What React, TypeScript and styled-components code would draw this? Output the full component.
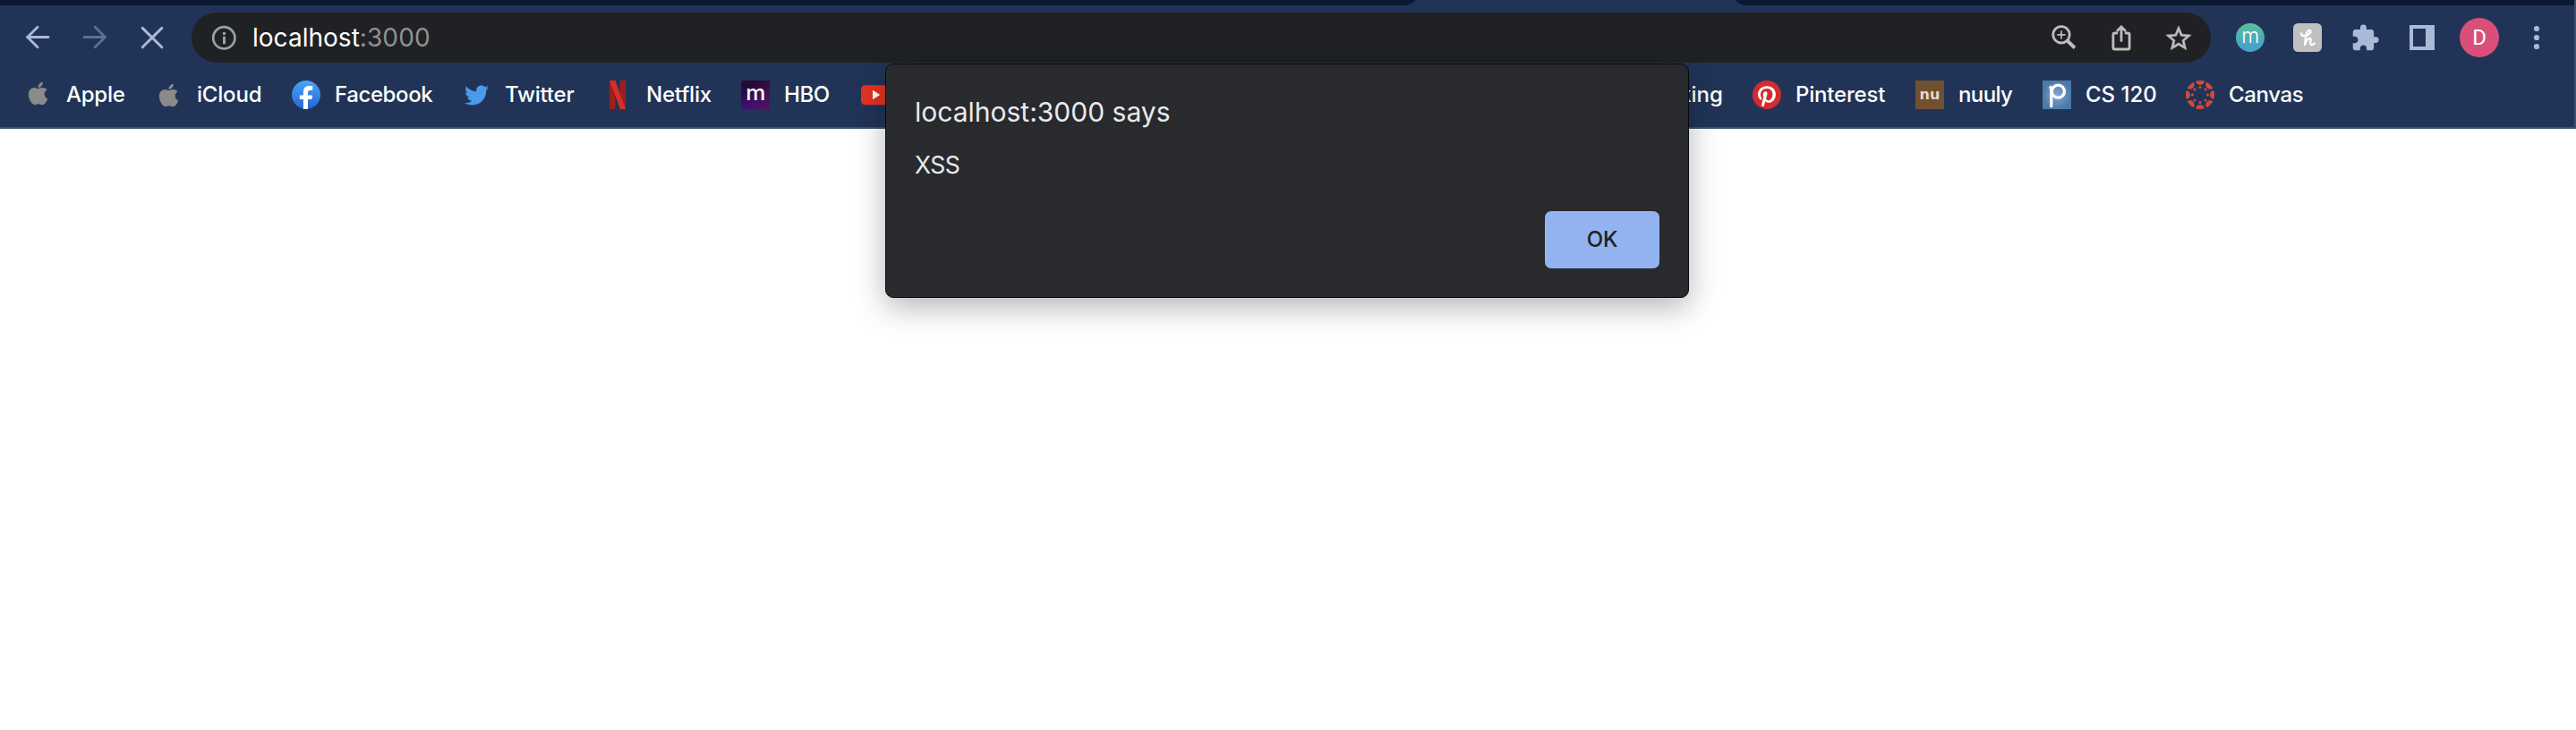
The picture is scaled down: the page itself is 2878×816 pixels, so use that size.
import React from "react";
import styled, { createGlobalStyle } from "styled-components";
import { FaApple, FaTwitter, FaPinterest } from "react-icons/fa";
import { MdExtension, MdStarBorder } from "react-icons/md";

const color = {
  strip: "#0b1a30",
  chrome: "#213457",
  edge: "#3d5173",
  icon: "#a9b9d8",
  iconDim: "#5e7194",
  field: "#202124",
  fieldIcon: "#bdbdbd",
  dialog: "#292a2d",
  button: "#93b3f0",
};

const GlobalStyle = createGlobalStyle`
  html, body { margin: 0; background: #fff; }
  body { font-family: Inter, "Liberation Sans", sans-serif; overflow: hidden; }
  * { box-sizing: border-box; }
`;

const Page = styled.div`
  position: relative;
  width: 2878px;
  height: 816px;
  overflow: hidden;
  background: #fff;
`;

const Chrome = styled.header`
  height: 144px;
  background: ${color.chrome};
  border-right: 2px solid rgba(255, 255, 255, 0.13);
  border-bottom: 2px solid ${color.edge};
`;

const TabStrip = styled.div`
  display: flex;
  justify-content: space-between;
  align-items: flex-end;
  height: 6px;
  overflow: hidden;
`;

const StripEnd = styled.div<{ $side: "left" | "right" }>`
  flex: none;
  width: ${(p) => (p.$side === "left" ? "1585px" : "941px")};
  height: 20px;
  background: ${color.strip};
  border-radius: ${(p) => (p.$side === "left" ? "0 0 16px 0" : "0 0 0 16px")};
`;

const Toolbar = styled.div`
  display: flex;
  align-items: center;
  height: 72px;
  padding: 0 10px;
`;

const Slot = styled.span<{ $tone?: string }>`
  display: flex;
  align-items: center;
  justify-content: center;
  flex: none;
  width: 64px;
  height: 56px;
  color: ${(p) => p.$tone ?? color.icon};
`;

const NavGroup = styled.nav`
  display: flex;
`;

const AddressBar = styled.div`
  display: flex;
  align-items: center;
  width: 2256px;
  height: 56px;
  margin: 0 12px;
  padding: 0 4px;
  border-radius: 28px;
  background: ${color.field};
`;

const Address = styled.div`
  flex: 1;
  padding-bottom: 1px;
  color: #fff;
  font-size: 28px;
  letter-spacing: 0.02px;
  line-height: 34px;
`;

const Port = styled.span`
  color: #909192;
  letter-spacing: 0.1px;
`;

const Avatar = styled.span`
  display: flex;
  align-items: center;
  justify-content: center;
  width: 44px;
  height: 44px;
  border-radius: 50%;
  background: #da4f7a;
  color: #fff;
  font: 400 24px/44px Roboto, sans-serif;
`;

const BookmarkBar = styled.div`
  display: flex;
  align-items: center;
  height: 56px;
  padding: 0 26px;
`;

const Bookmark = styled.a<{ $width: number }>`
  display: flex;
  align-items: center;
  flex: none;
  gap: 16px;
  width: ${(p) => p.$width}px;
  height: 32px;
  white-space: nowrap;
`;

const BookmarkLabel = styled.span<{ $tracking: number }>`
  color: #fff;
  font-size: 24px;
  font-weight: 500;
  line-height: 30px;
  letter-spacing: ${(p) => p.$tracking}px;
`;

const Favicon = styled.span<{ $drop?: number }>`
  display: flex;
  align-items: center;
  justify-content: center;
  flex: none;
  width: 32px;
  height: 32px;
  margin-top: ${(p) => p.$drop ?? 0}px;
`;

const PinDisc = styled.span`
  display: flex;
  width: 32px;
  height: 32px;
  border-radius: 50%;
  background: radial-gradient(circle, #fff 60%, #d32b2f 62%);
`;

const NuTile = styled.span`
  width: 32px;
  height: 32px;
  background: #70502e;
  color: #e8d8c8;
  font: 700 16px/31px "DejaVu Sans", sans-serif;
  text-align: center;
`;

const Dialog = styled.section`
  position: absolute;
  left: 989px;
  top: 71px;
  display: flex;
  flex-direction: column;
  width: 898px;
  height: 262px;
  padding: 35px 32px 32px 32px;
  border: 1px solid #08090b;
  border-radius: 9px;
  background: ${color.dialog};
  box-shadow: 0 10px 34px rgba(0, 0, 0, 0.3);
  color: #e8eaed;
`;

const DialogTitle = styled.h1`
  margin: 0;
  font-size: 30px;
  font-weight: 400;
  line-height: 36px;
`;

const DialogMessage = styled.p`
  margin: 25px 0 0;
  font-size: 26.5px;
  font-weight: 400;
  line-height: 32px;
  letter-spacing: -0.5px;
`;

const OkButton = styled.button`
  align-self: flex-end;
  width: 128px;
  height: 64px;
  margin-top: auto;
  padding: 0;
  border: 0;
  border-radius: 7px;
  background: ${color.button};
  color: #202124;
  font: 500 24px/30px Inter, sans-serif;
  letter-spacing: -0.2px;
`;

const Svg = (p: React.SVGProps<SVGSVGElement>) => (
  <svg width="32" height="32" viewBox="0 0 32 32" fill="none" stroke="currentColor" strokeLinecap="round" {...p} />
);

const BackIcon = () => (
  <Svg strokeWidth="2.8"><path d="M28 15.5H4.5M16 4.3 4.7 15.5 16 26.8" /></Svg>
);
const ForwardIcon = () => (
  <Svg strokeWidth="2.8"><path d="M4 15.5H27.5M16.2 4.3 27.4 15.5 16.2 26.8" /></Svg>
);
const StopIcon = () => (
  <Svg strokeWidth="3"><path d="M5.2 5.4 26.8 26.8M26.8 5.4 5.2 26.8" /></Svg>
);
const InfoIcon = () => (
  <Svg>
    <circle cx="16.3" cy="16.3" r="12.1" strokeWidth="2.7" />
    <path d="M15 10h3v3h-3zM15 14.8h3v8.4h-3z" fill="currentColor" stroke="none" />
  </Svg>
);
const ZoomIcon = () => (
  <Svg strokeLinecap="butt">
    <circle cx="13" cy="12.8" r="9.2" strokeWidth="2.8" />
    <path d="M19.2 19 28 27.6" strokeWidth="4" />
    <path d="M8.4 12.8h9.2M13 8.2v9.2" strokeWidth="1.7" />
  </Svg>
);
const ShareIcon = () => (
  <Svg strokeWidth="2.8">
    <path d="M11 11H8.6Q6.9 11 6.9 12.7V27.2Q6.9 29 8.7 29H23.3Q25.1 29 25.1 27.2V12.7Q25.1 11 23.4 11H21" />
    <path d="M16 19.5V4.5M11.7 8.2 16 4 20.3 8.2" />
  </Svg>
);
const PanelIcon = () => (
  <Svg stroke="none"><path fill="currentColor" fillRule="evenodd" d="M2 2h28v28H2zM6 6v20h14V6z" /></Svg>
);
const MenuIcon = () => (
  <Svg stroke="none" fill="currentColor">
    <circle cx="16" cy="6" r="3.1" /><circle cx="16" cy="16" r="3.1" /><circle cx="16" cy="26" r="3.1" />
  </Svg>
);
const MomentumIcon = () => (
  <Svg stroke="none">
    <defs><linearGradient id="mint" x1="0" y1="0" x2="0.15" y2="1"><stop offset="0.1" stopColor="#57bf9b" /><stop offset="0.85" stopColor="#46a3c9" /></linearGradient></defs>
    <circle cx="16" cy="16" r="16" fill="url(#mint)" />
    <text x="6.2" y="22" fontFamily="Inter" fontSize="23.5" fontWeight="300" fill="#fff" textLength="20" lengthAdjust="spacingAndGlyphs">m</text>
  </Svg>
);
const HoneyIcon = () => (
  <Svg stroke="#fff" strokeWidth="2.3" strokeLinejoin="round">
    <rect width="32" height="32" rx="5.5" fill="#c0c0c0" stroke="none" />
    <path d="M9 11.4C9 14.4 13 14.8 16.4 13 20 11 20.6 7.8 18 7.8 14.8 7.8 13.6 13.5 13.2 24 14.4 19.6 16.8 16.8 18.8 17 21 17.4 18.6 21 19.2 22.8 20 24.6 22.4 24.2 23.8 22.6" />
  </Svg>
);

const FacebookIcon = () => (
  <Svg stroke="none">
    <defs>
      <linearGradient id="fb" x1="0" y1="0" x2="0" y2="1"><stop stopColor="#49a6f5" /><stop offset="1" stopColor="#2563d8" /></linearGradient>
    </defs>
    <circle cx="16" cy="16" r="16" fill="url(#fb)" />
    <path fill="#fff" d="M12.9 31.8V21H8.8V16.4H12.9V13C12.9 8.4 15.2 6 19.3 6H23.2V10.8H21C19 10.8 18 11.6 18 13.5V16.4H23.1L22.4 21H18V31.8Q15.4 32.2 12.9 31.8Z" />
  </Svg>
);
const NetflixIcon = () => (
  <Svg stroke="none">
    <path fill="#a01f1c" d="M7 0h6.3v32H7zM18.7 0H25v32h-6.3z" />
    <path fill="#d62f27" d="M7 0h6.3L25 32h-6z" />
  </Svg>
);
const HboIcon = () => (
  <Svg stroke="none">
    <defs>
      <linearGradient id="hbo" x1="0" y1="0" x2="0" y2="1"><stop offset="0.2" stopColor="#230b35" /><stop offset="1" stopColor="#38107a" /></linearGradient>
      <linearGradient id="hbo2" x1="0.3" y1="0.3" x2="1" y2="1"><stop stopColor="#541060" stopOpacity="0" /><stop offset="1" stopColor="#541060" /></linearGradient>
    </defs>
    <rect width="32" height="32" rx="1.5" fill="url(#hbo)" />
    <rect width="32" height="32" rx="1.5" fill="url(#hbo2)" />
    <text x="5.2" y="22" fontFamily="Inter" fontSize="23" fontWeight="500" fill="#fff" textLength="22" lengthAdjust="spacingAndGlyphs">m</text>
  </Svg>
);
const YoutubeIcon = () => (
  <Svg stroke="none">
    <rect x="2" y="5.2" width="32" height="22" rx="4.5" fill="#e33324" />
    <path fill="#fff" d="M15 10.8 23.2 16 15 21.3z" />
  </Svg>
);
const PiazzaIcon = () => (
  <Svg strokeWidth="3.2" stroke="#fff" strokeLinecap="butt">
    <defs><radialGradient id="pz"><stop stopColor="#84a9cc" /><stop offset="1" stopColor="#4c7aa8" /></radialGradient></defs>
    <rect width="32" height="32" fill="url(#pz)" stroke="none" />
    <path d="M9.8 30V12Q9.8 8 8 6.6" />
    <circle cx="17.4" cy="12.2" r="7" />
  </Svg>
);
const spokes = [0, 45, 90, 135, 180, 225, 270, 315];
const CanvasIcon = () => (
  <Svg stroke="none" fill="#d44a38">
    <defs><clipPath id="rim"><circle cx="16" cy="16" r="16" /></clipPath></defs>
    <g clipPath="url(#rim)">
      {spokes.map((a) => (
        <g key={a} transform={`rotate(${a} 16 16)`}>
          <circle cx="16" cy="0" r="5" />
          <circle cx="16" cy="7.5" r="1.5" />
        </g>
      ))}
    </g>
  </Svg>
);

type Mark = { label?: string; width: number; tracking?: number; drop?: number; icon?: React.ReactNode };

const marks: Mark[] = [
  { label: "Apple", width: 146, tracking: -0.25, icon: <FaApple size={29} color="#8b8b8b" />, drop: -4 },
  { label: "iCloud", width: 154, tracking: -0.2, icon: <FaApple size={29} color="#8b8b8b" /> },
  { label: "Facebook", width: 190, tracking: -0.4, icon: <FacebookIcon /> },
  { label: "Twitter", width: 158, tracking: -0.2, icon: <FaTwitter size={27} color="#4a9be8" /> },
  { label: "Netflix", width: 154, tracking: -0.2, icon: <NetflixIcon /> },
  { label: "HBO", width: 132, tracking: -0.4, icon: <HboIcon /> },
  { width: 916, icon: <YoutubeIcon /> },
  { label: "king", width: 82 },
  { label: "Pinterest", width: 182, tracking: -0.2, icon: <PinDisc><FaPinterest size={32} color="#d32b2f" /></PinDisc> },
  { label: "nuuly", width: 142, tracking: -0.6, icon: <NuTile>nu</NuTile> },
  { label: "CS 120", width: 160, icon: <PiazzaIcon /> },
  { label: "Canvas", width: 134, tracking: -0.35, icon: <CanvasIcon /> },
];

const BookmarkItem = ({ label, width, tracking = 0, drop, icon }: Mark) => (
  <Bookmark $width={width}>
    {icon && <Favicon $drop={drop}>{icon}</Favicon>}
    {label && <BookmarkLabel $tracking={tracking}>{label}</BookmarkLabel>}
  </Bookmark>
);

const StarFrame = styled.span`
  display: flex;
  margin-top: 1px;

  path {
    stroke: currentColor;
    stroke-width: 0.35px;
  }

  path[fill="none"] {
    stroke: none;
  }
`;

export default function App() {
  return (
    <Page>
      <GlobalStyle />
      <Chrome>
        <TabStrip>
          <StripEnd $side="left" />
          <StripEnd $side="right" />
        </TabStrip>
        <Toolbar>
          <NavGroup>
            <Slot><BackIcon /></Slot>
            <Slot $tone={color.iconDim}><ForwardIcon /></Slot>
            <Slot><StopIcon /></Slot>
          </NavGroup>
          <AddressBar>
            <Slot $tone="#9aa0a3"><InfoIcon /></Slot>
            <Address>localhost<Port>:3000</Port></Address>
            <Slot $tone={color.fieldIcon}><ZoomIcon /></Slot>
            <Slot $tone={color.fieldIcon}><ShareIcon /></Slot>
            <Slot $tone={color.fieldIcon}><StarFrame><MdStarBorder size={34} /></StarFrame></Slot>
          </AddressBar>
          <NavGroup>
            <Slot><MomentumIcon /></Slot>
            <Slot><HoneyIcon /></Slot>
            <Slot><MdExtension size={33} /></Slot>
            <Slot><PanelIcon /></Slot>
            <Slot><Avatar>D</Avatar></Slot>
            <Slot><MenuIcon /></Slot>
          </NavGroup>
        </Toolbar>
        <BookmarkBar>
          {marks.map((m, i) => <BookmarkItem key={i} {...m} />)}
        </BookmarkBar>
      </Chrome>
      <Dialog role="alertdialog">
        <DialogTitle>localhost:3000 says</DialogTitle>
        <DialogMessage>XSS</DialogMessage>
        <OkButton>OK</OkButton>
      </Dialog>
    </Page>
  );
}
